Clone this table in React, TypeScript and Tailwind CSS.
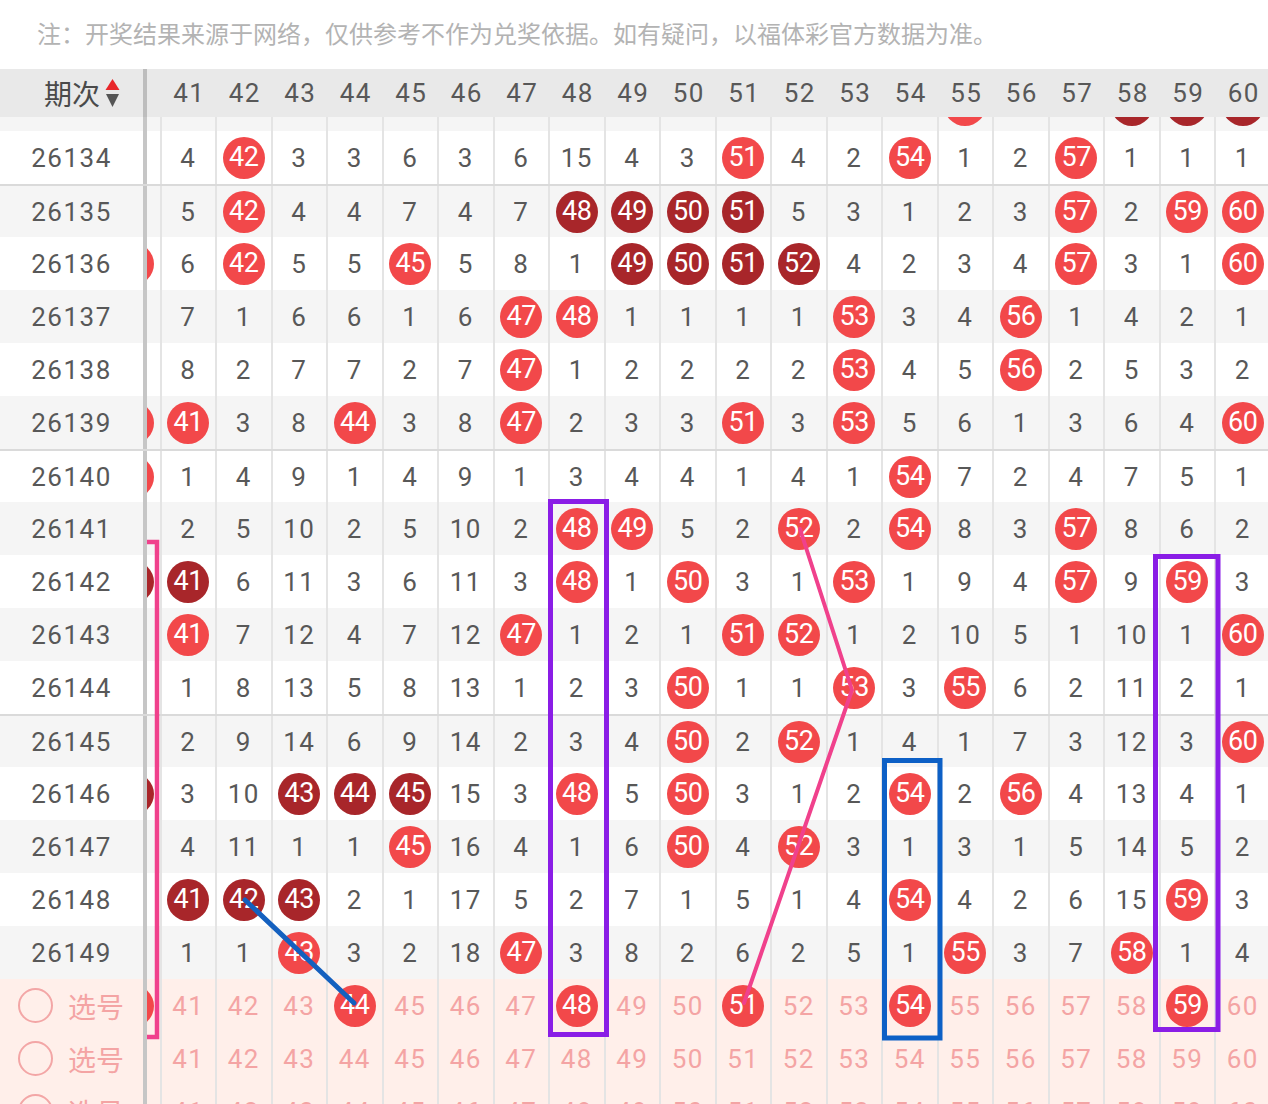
import React from 'react';

type V = number | 'R' | 'D' | null;
type Row = { p: string; c40: V; v: V[] };

const R = 'R' as const;
const D = 'D' as const;
const _ = null;

const rows: Row[] = [
  { p: '26133', c40: _, v: [_, _, _, _, _, _, _, _, _, _, _, _, _, _, R, _, _, D, D, D] },
  { p: '26134', c40: _, v: [4, R, 3, 3, 6, 3, 6, 15, 4, 3, R, 4, 2, R, 1, 2, R, 1, 1, 1] },
  { p: '26135', c40: _, v: [5, R, 4, 4, 7, 4, 7, D, D, D, D, 5, 3, 1, 2, 3, R, 2, R, R] },
  { p: '26136', c40: R, v: [6, R, 5, 5, R, 5, 8, 1, D, D, D, D, 4, 2, 3, 4, R, 3, 1, R] },
  { p: '26137', c40: _, v: [7, 1, 6, 6, 1, 6, R, R, 1, 1, 1, 1, R, 3, 4, R, 1, 4, 2, 1] },
  { p: '26138', c40: _, v: [8, 2, 7, 7, 2, 7, R, 1, 2, 2, 2, 2, R, 4, 5, R, 2, 5, 3, 2] },
  { p: '26139', c40: R, v: [R, 3, 8, R, 3, 8, R, 2, 3, 3, R, 3, R, 5, 6, 1, 3, 6, 4, R] },
  { p: '26140', c40: R, v: [1, 4, 9, 1, 4, 9, 1, 3, 4, 4, 1, 4, 1, R, 7, 2, 4, 7, 5, 1] },
  { p: '26141', c40: _, v: [2, 5, 10, 2, 5, 10, 2, R, R, 5, 2, R, 2, R, 8, 3, R, 8, 6, 2] },
  { p: '26142', c40: D, v: [D, 6, 11, 3, 6, 11, 3, R, 1, R, 3, 1, R, 1, 9, 4, R, 9, R, 3] },
  { p: '26143', c40: _, v: [R, 7, 12, 4, 7, 12, R, 1, 2, 1, R, R, 1, 2, 10, 5, 1, 10, 1, R] },
  { p: '26144', c40: _, v: [1, 8, 13, 5, 8, 13, 1, 2, 3, R, 1, 1, R, 3, R, 6, 2, 11, 2, 1] },
  { p: '26145', c40: _, v: [2, 9, 14, 6, 9, 14, 2, 3, 4, R, 2, R, 1, 4, 1, 7, 3, 12, 3, R] },
  { p: '26146', c40: D, v: [3, 10, D, D, D, 15, 3, R, 5, R, 3, 1, 2, R, 2, R, 4, 13, 4, 1] },
  { p: '26147', c40: _, v: [4, 11, 1, 1, R, 16, 4, 1, 6, R, 4, R, 3, 1, 3, 1, 5, 14, 5, 2] },
  { p: '26148', c40: _, v: [D, D, D, 2, 1, 17, 5, 2, 7, 1, 5, 1, 4, R, 4, 2, 6, 15, R, 3] },
  { p: '26149', c40: _, v: [1, 1, R, 3, 2, 18, R, 3, 8, 2, 6, 2, 5, 1, R, 3, 7, R, 1, 4] },
];

const groupStart = new Set(['26135', '26140', '26145']);
const selected = [new Set([40, 44, 48, 51, 54, 59]), new Set<number>(), new Set<number>()];

const cols = Array.from({ length: 21 }, (_x, i) => 40 + i);

const digitFont = { fontFamily: 'Roboto, "Noto Sans", sans-serif' };
const cjkFont = { fontFamily: '"Noto Sans CJK SC", "Noto Sans", sans-serif' };

function Ball({ n, dark }: { n: number; dark: boolean }) {
  return (
    <div
      className={
        dark
          ? 'w-[42px] h-[42px] shrink-0 rounded-full bg-[#a8262a] flex items-center justify-center text-white text-[27px] tracking-[-0.5px] leading-none'
          : 'w-[42px] h-[42px] shrink-0 rounded-full bg-[#f2484a] flex items-center justify-center text-white text-[27px] tracking-[-0.5px] leading-none'
      }
    >
      {n}
    </div>
  );
}

function Cell({ col, v, pink }: { col: number; v: V; pink?: boolean }) {
  return (
    <div className="w-[55.5px] shrink-0 h-full flex items-center justify-center border-r-2 border-[#e4e4e4]">
      {v === 'R' ? (
        <Ball n={col} dark={false} />
      ) : v === 'D' ? (
        <Ball n={col} dark />
      ) : v === null ? null : (
        <span
          className={
            pink
              ? 'text-[26px] tracking-[1.5px] text-[#f4a4a4] leading-none'
              : 'text-[26px] tracking-[1.5px] text-[#585858] leading-none'
          }
        >
          {v}
        </span>
      )}
    </div>
  );
}

function SortIcon() {
  return (
    <svg width="15" height="29" viewBox="0 0 15 29" className="shrink-0">
      <polygon points="7.5,0 14.5,11 0.5,11" fill="#e8262a" />
      <polygon points="1,15 14,15 7.5,28" fill="#555555" />
    </svg>
  );
}

export default function App() {
  return (
    <div className="relative w-[1268px] h-[1104px] overflow-hidden bg-white" style={digitFont}>
      {/* note */}
      <div className="h-[69px] flex items-center pl-[37px] pb-[3px]">
        <span className="text-[24px] text-[#b3b3b3] leading-none whitespace-nowrap" style={cjkFont}>
          注：开奖结果来源于网络，仅供参考不作为兑奖依据。如有疑问，以福体彩官方数据为准。
        </span>
      </div>

      {/* header */}
      <div className="flex h-[48px] bg-[#e9e9e9]">
        <div className="w-[147px] shrink-0 border-r-4 border-[#bdbdbd] flex items-center justify-center gap-[5px] pl-[21px]">
          <span className="text-[28px] text-[#4a4a4a] leading-none" style={cjkFont}>
            期次
          </span>
          <SortIcon />
        </div>
        <div className="flex-1 overflow-hidden flex">
          <div className="flex shrink-0 -ml-[41px]">
            {cols.map((c) => (
              <div key={c} className="w-[55.5px] shrink-0 h-full flex items-center justify-center">
                {c > 40 ? (
                  <span className="text-[26px] tracking-[1.5px] text-[#585858] leading-none">{c}</span>
                ) : null}
              </div>
            ))}
          </div>
        </div>
      </div>

      {/* body */}
      <div className="h-[987px] overflow-hidden">
        <div className="-mt-[39px]">
          {rows.map((r, idx) => {
            const odd = idx % 2 === 0;
            const grp = groupStart.has(r.p);
            const cls = grp
              ? odd
                ? 'flex h-[53px] bg-[#f5f5f5] border-t-2 border-[#dadada]'
                : 'flex h-[53px] bg-white border-t-2 border-[#dadada]'
              : odd
              ? 'flex h-[53px] bg-[#f5f5f5]'
              : 'flex h-[53px] bg-white';
            return (
              <div key={r.p} className={cls}>
                <div className="w-[147px] shrink-0 h-full border-r-4 border-[#c6c6c6] flex items-center justify-center">
                  {idx > 0 ? (
                    <span className="text-[26px] tracking-[1.5px] text-[#585858] leading-none">{r.p}</span>
                  ) : null}
                </div>
                <div className="flex-1 overflow-hidden flex">
                  <div className="flex shrink-0 -ml-[41px]">
                    <Cell col={40} v={r.c40} />
                    {r.v.map((v, i) => (
                      <Cell key={i} col={41 + i} v={v} />
                    ))}
                  </div>
                </div>
              </div>
            );
          })}
          {selected.map((sel, si) => (
            <div key={si} className="flex h-[53px] bg-[#ffefea]">
              <div className="w-[147px] shrink-0 h-full border-r-4 border-[#c6c6c6] flex items-center pl-[18px] gap-[15px]">
                <span className="w-[35px] h-[35px] rounded-full border-2 border-[#f3a6a6] shrink-0" />
                <span className="text-[28px] text-[#f4a4a4] leading-none" style={cjkFont}>
                  选号
                </span>
              </div>
              <div className="flex-1 overflow-hidden flex">
                <div className="flex shrink-0 -ml-[41px]">
                  {cols.map((c) => (
                    <Cell key={c} col={c} v={sel.has(c) ? 'R' : c} pink />
                  ))}
                </div>
              </div>
            </div>
          ))}
        </div>
      </div>

      {/* overlay markers */}
      <svg
        className="absolute top-0 left-0 pointer-events-none"
        width="1268"
        height="1104"
        viewBox="0 0 1268 1104"
      >
        <path d="M147 542 H157 V1037 H147" fill="none" stroke="#f0418c" strokeWidth="4.5" />
        <rect x="550.5" y="501.5" width="56" height="533" fill="none" stroke="#8a1de6" strokeWidth="5" />
        <rect x="1155.5" y="556.5" width="62.5" height="473" fill="none" stroke="#8a1de6" strokeWidth="5" />
        <rect x="884.5" y="760.5" width="55.5" height="277.5" fill="none" stroke="#0d60c6" strokeWidth="5" />
        <polyline
          points="800,529 852,690 744,1003"
          fill="none"
          stroke="#f0418c"
          strokeWidth="4"
          strokeLinejoin="round"
          strokeLinecap="round"
        />
        <line x1="245" y1="900" x2="354" y2="1003" stroke="#1460bf" strokeWidth="5" strokeLinecap="round" />
      </svg>
    </div>
  );
}
